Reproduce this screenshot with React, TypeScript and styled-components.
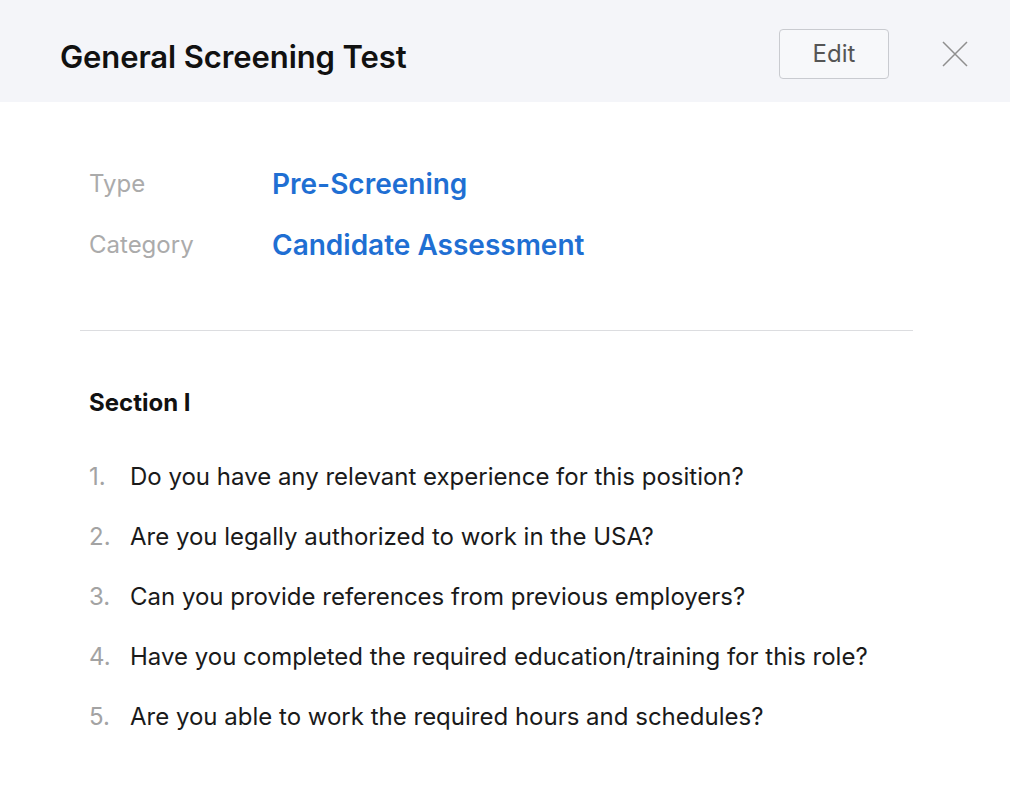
import styled, { createGlobalStyle } from "styled-components";

const GlobalStyle = createGlobalStyle`
  body {
    margin: 0;
    background: #ffffff;
    font-family: Inter, "Noto Sans", sans-serif;
  }
`;

const Page = styled.div`
  width: 1010px;
  height: 808px;
  background: #ffffff;
`;

const Header = styled.header`
  display: flex;
  align-items: center;
  height: 102px;
  padding: 5px 42px 0 60px;
  box-sizing: border-box;
  background: #f4f5f9;
`;

const Title = styled.h1`
  flex: 1;
  margin: 6px 0 0;
  font-size: 31px;
  font-weight: 600;
  color: #111111;
  letter-spacing: -0.1px;
`;

const EditButton = styled.button`
  width: 110px;
  height: 50px;
  margin-right: 53px;
  border: 1.5px solid #c9cbd0;
  border-radius: 4px;
  background: #f7f8fa;
  font-family: inherit;
  font-size: 24px;
  color: #555555;
  cursor: pointer;
`;

const CloseButton = styled.button`
  display: flex;
  padding: 0;
  border: none;
  background: none;
  cursor: pointer;
`;

const Body = styled.main`
  padding: 0 97px 0 80px;
`;

const Meta = styled.dl`
  display: grid;
  grid-template-columns: 183px auto;
  row-gap: 27px;
  align-items: center;
  margin: 0;
  padding: 65px 0 68px 9px;
  border-bottom: 1.5px solid #dcdde0;
`;

const MetaLabel = styled.dt`
  font-size: 24px;
  color: #ababab;
  line-height: 34px;
`;

const MetaValue = styled.dd`
  margin: 0;
  font-size: 28px;
  font-weight: 600;
  color: #1f6fd3;
  line-height: 34px;
`;

const Section = styled.section`
  padding: 57px 0 0 9px;
`;

const SectionTitle = styled.h2`
  margin: 0 0 42px;
  font-size: 24px;
  font-weight: 700;
  color: #111111;
  line-height: 30px;
`;

const Questions = styled.ol`
  display: flex;
  flex-direction: column;
  gap: 26px;
  margin: 0;
  padding: 0;
  list-style: none;
`;

const Question = styled.li`
  display: flex;
  font-size: 24px;
  line-height: 34px;
  color: #1a1a1a;
`;

const Number = styled.span`
  width: 41px;
  flex-shrink: 0;
  color: #a3a3a3;
`;

const questions = [
  "Do you have any relevant experience for this position?",
  "Are you legally authorized to work in the USA?",
  "Can you provide references from previous employers?",
  "Have you completed the required education/training for this role?",
  "Are you able to work the required hours and schedules?",
];

export default function App() {
  return (
    <Page>
      <GlobalStyle />
      <Header>
        <Title>General Screening Test</Title>
        <EditButton>Edit</EditButton>
        <CloseButton aria-label="Close">
          <svg width="26" height="26" viewBox="0 0 26 26">
            <path
              d="M1 1 L25 25 M25 1 L1 25"
              stroke="#8f8f8f"
              strokeWidth="1.5"
              fill="none"
            />
          </svg>
        </CloseButton>
      </Header>
      <Body>
        <Meta>
          <MetaLabel>Type</MetaLabel>
          <MetaValue>Pre-Screening</MetaValue>
          <MetaLabel>Category</MetaLabel>
          <MetaValue>Candidate Assessment</MetaValue>
        </Meta>
        <Section>
          <SectionTitle>Section I</SectionTitle>
          <Questions>
            {questions.map((q, i) => (
              <Question key={q}>
                <Number>{i + 1}.</Number>
                {q}
              </Question>
            ))}
          </Questions>
        </Section>
      </Body>
    </Page>
  );
}
